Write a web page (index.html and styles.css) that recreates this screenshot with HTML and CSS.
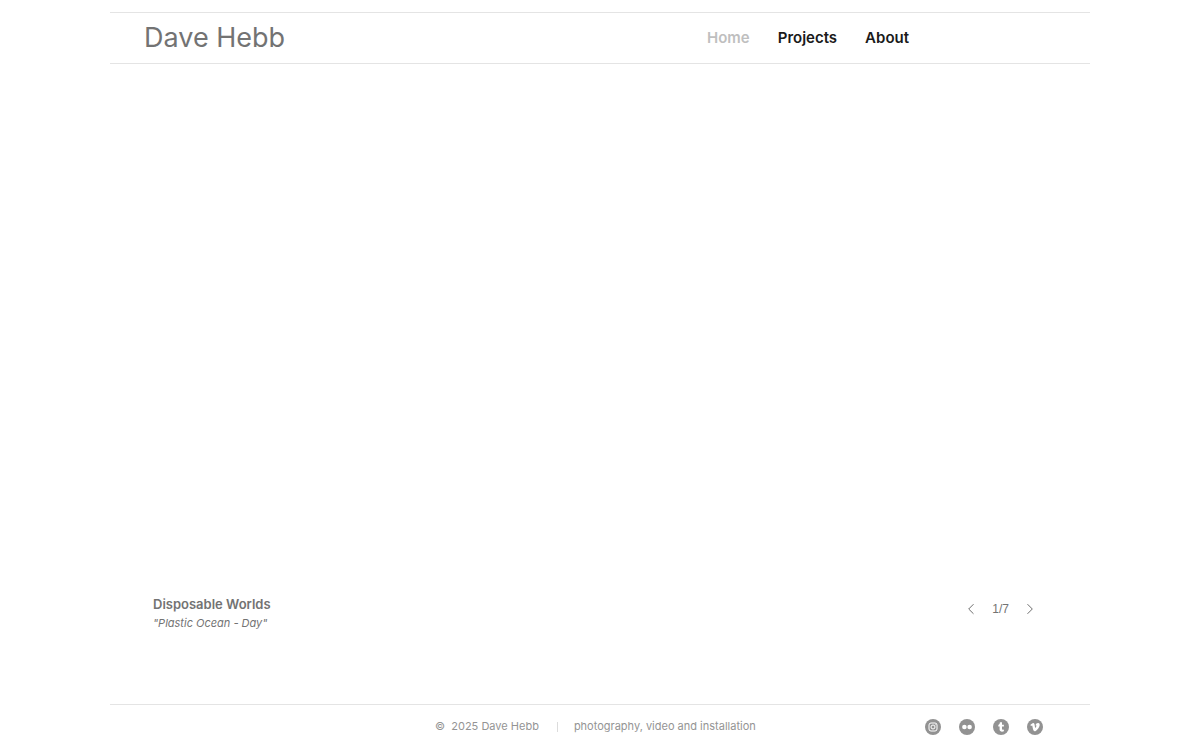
FILE: index.html
```html
<!DOCTYPE html>
<html lang="en">
<head>
    <meta charset="UTF-8">
    <meta name="viewport" content="width=device-width, initial-scale=1.0">
    <title>Dave Hebb</title>
    <link rel="stylesheet" href="styles.css">
</head>
<body>
    <div class="page">
        <header class="site-header">
            <h1 class="site-title"><a href="#">Dave Hebb</a></h1>
            <nav class="site-nav">
                <a href="#" class="active" aria-current="page">Home</a>
                <a href="#projects">Projects</a>
                <a href="#about">About</a>
            </nav>
        </header>

        <main class="gallery">
            <div class="caption">
                <h2>Disposable Worlds</h2>
                <p>"Plastic Ocean - Day"</p>
            </div>
            <div class="pager">
                <button type="button" aria-label="Previous">
                    <svg width="8" height="12" viewBox="0 0 8 12"><path d="M6.5 1.2 1.7 6l4.8 4.8"/></svg>
                </button>
                <span>1/7</span>
                <button type="button" aria-label="Next">
                    <svg width="8" height="12" viewBox="0 0 8 12"><path d="M1.5 1.2 6.3 6l-4.8 4.8"/></svg>
                </button>
            </div>
        </main>

        <footer class="site-footer">
            <p class="copyright">©&nbsp; 2025 Dave Hebb</p>
            <span class="divider"></span>
            <p class="tagline">photography, video and installation</p>
            <div class="social">
                <a href="#instagram" aria-label="Instagram">
                    <svg width="16" height="16" viewBox="0 0 16 16">
                        <circle cx="8" cy="8" r="8"/>
                        <rect class="line" x="4" y="4" width="8" height="8" rx="2"/>
                        <circle class="line" cx="8" cy="8" r="2"/>
                        <circle class="mark" cx="10.3" cy="5.7" r=".5"/>
                    </svg>
                </a>
                <a href="#flickr" aria-label="Flickr">
                    <svg width="16" height="16" viewBox="0 0 16 16">
                        <circle cx="8" cy="8" r="8"/>
                        <circle class="mark" cx="5.4" cy="8" r="2.3"/>
                        <circle class="mark" cx="10.6" cy="8" r="2.3"/>
                    </svg>
                </a>
                <a href="#tumblr" aria-label="Tumblr">
                    <svg width="16" height="16" viewBox="0 0 16 16">
                        <circle cx="8" cy="8" r="8"/>
                        <path class="mark" d="M6.9 3.3h2.1v2.5h1.9v1.800H9v2.500c0 .8.900.9 1.900.4v1.800c-2.200.9-4.300.2-4.300-1.800V7.600H5.300V6c1-.3 1.500-1.200 1.600-2.700z"/>
                    </svg>
                </a>
                <a href="#vimeo" aria-label="Vimeo">
                    <svg width="16" height="16" viewBox="0 0 16 16">
                        <circle cx="8" cy="8" r="8"/>
                        <path class="mark" d="M3.300 6.100C4.400 5.100 5.400 4.100 6.200 4.100c1.800-.1 1.400 3.500 2.100 4.800.4-.3 1.200-1.700 1.100-2.200-.1-.5-.6-.4-1-.2.500-1.800 1.600-2.600 2.800-2.500 1.300.1 1.700 1 1.400 2.400-.6 2.400-3.200 5.800-4.900 5.800-1.900 0-1.900-4.200-2.500-5.600-.2-.3-.7 0-1.100.3z"/>
                    </svg>
                </a>
            </div>
        </footer>
    </div>
</body>
</html>
```
FILE: styles.css
```css
* {
    box-sizing: border-box;
}
body {
    margin: 0;
    background: #fff;
    color: #737373;
    font-family: Inter, "Liberation Sans", sans-serif;
}
h1, h2, p {
    margin: 0;
}
a {
    color: inherit;
    text-decoration: none;
}
.page {
    display: flex;
    flex-direction: column;
    max-width: 980px;
    min-height: 100vh;
    margin: 0 auto;
    padding-top: 12px;
}

/* Header */
.site-header {
    display: flex;
    align-items: center;
    justify-content: space-between;
    height: 52px;
    padding: 0 181px 0 34px;
    border-top: 1px solid #e4e4e4;
    border-bottom: 1px solid #e4e4e4;
}
.site-title {
    font-size: 27px;
    font-weight: 400;
    line-height: 32px;
}
.site-nav {
    display: flex;
    gap: 28px;
    color: #1a1a1a;
    font-size: 15px;
    font-weight: 600;
    line-height: 20px;
}
.site-nav .active {
    color: #bfbfbf;
}

/* Slideshow caption and pager */
.gallery {
    flex: 1;
    display: flex;
    align-items: flex-end;
    justify-content: space-between;
    padding: 0 56px 72px 43px;
}
.caption h2 {
    font-size: 13px;
    font-weight: 600;
    line-height: 20px;
}
.caption p {
    font-size: 11px;
    font-style: italic;
    font-weight: 400;
    line-height: 18px;
}
.pager {
    display: flex;
    align-items: center;
    gap: 17px;
    padding-bottom: 14px;
    font-family: "Liberation Sans", sans-serif;
    font-size: 12px;
    line-height: 18px;
}
.pager button {
    display: flex;
    padding: 0;
    border: 0;
    background: none;
    cursor: pointer;
}
.pager svg {
    fill: none;
    stroke: #6e6e6e;
}

/* Footer */
.site-footer {
    display: flex;
    align-items: flex-start;
    height: 36px;
    padding: 13px 47px 0 325px;
    border-top: 1px solid #e4e4e4;
    color: #949494;
    font-size: 11px;
    font-weight: 400;
    line-height: 16px;
}
.divider {
    width: 1px;
    height: 10px;
    margin: 4px 16px 0 18px;
    background: #dcdcdc;
}
.social {
    display: flex;
    gap: 18px;
    margin: 1px 0 0 auto;
}
.social a,
.social svg {
    display: block;
}
.social svg {
    fill: #929292;
}
.social .mark {
    fill: #fff;
}
.social .line {
    fill: none;
    stroke: #fff;
}
```
